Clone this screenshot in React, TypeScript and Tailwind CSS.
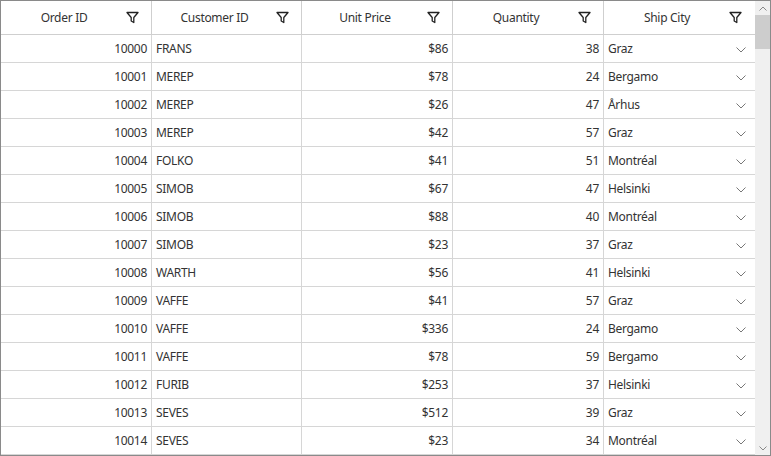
const rows: [number, string, string, number, string][] = [
  [10000, "FRANS", "$86", 38, "Graz"],
  [10001, "MEREP", "$78", 24, "Bergamo"],
  [10002, "MEREP", "$26", 47, "Århus"],
  [10003, "MEREP", "$42", 57, "Graz"],
  [10004, "FOLKO", "$41", 51, "Montréal"],
  [10005, "SIMOB", "$67", 47, "Helsinki"],
  [10006, "SIMOB", "$88", 40, "Montréal"],
  [10007, "SIMOB", "$23", 37, "Graz"],
  [10008, "WARTH", "$56", 41, "Helsinki"],
  [10009, "VAFFE", "$41", 57, "Graz"],
  [10010, "VAFFE", "$336", 24, "Bergamo"],
  [10011, "VAFFE", "$78", 59, "Bergamo"],
  [10012, "FURIB", "$253", 37, "Helsinki"],
  [10013, "SEVES", "$512", 39, "Graz"],
  [10014, "SEVES", "$23", 34, "Montréal"],
];

function Funnel() {
  return (
    <svg width="13" height="13" viewBox="0 0 13 13" fill="none" stroke="#222" strokeWidth="1.3">
      <path d="M1 1.5h11L7.8 6.5v5L5.2 10V6.5z" strokeLinejoin="round" />
    </svg>
  );
}

function Chevron() {
  return (
    <svg width="10" height="6" viewBox="0 0 10 6" fill="none" stroke="#777" strokeWidth="1">
      <path d="M0.5 0.5L5 5l4.5-4.5" />
    </svg>
  );
}

const cols = ["w-[151px]", "w-[150px]", "w-[151px]", "w-[151px]", "w-[150px]"];
const heads = ["Order ID", "Customer ID", "Unit Price", "Quantity", "Ship City"];

export default function App() {
  return (
    <div className="w-[771px] h-[456px] bg-white border border-[#8a8a8a] flex overflow-hidden text-[12px] tracking-[-0.3px] text-[#333]" style={{ fontFamily: '"Noto Sans", "Open Sans", sans-serif' }}>
      <div className="w-[754px] flex flex-col">
        <div className="flex h-[34px] border-b border-[#cfcfcf] shrink-0">
          {heads.map((h, i) => (
            <div key={h} className={`${cols[i]} ${i < 4 ? "border-r border-[#cfcfcf]" : ""} relative flex items-center justify-center pr-[24px]`}>
              <span>{h}</span>
              <span className="absolute right-[12px] top-[10px]"><Funnel /></span>
            </div>
          ))}
        </div>
        {rows.map((r) => (
          <div key={r[0]} className="flex h-[28px] border-b border-[#d6d6d6] shrink-0">
            <div className={`${cols[0]} border-r border-[#d6d6d6] flex items-center justify-end pr-[4px]`}>{r[0]}</div>
            <div className={`${cols[1]} border-r border-[#d6d6d6] flex items-center pl-[4px]`}>{r[1]}</div>
            <div className={`${cols[2]} border-r border-[#d6d6d6] flex items-center justify-end pr-[4px]`}>{r[2]}</div>
            <div className={`${cols[3]} border-r border-[#d6d6d6] flex items-center justify-end pr-[4px]`}>{r[3]}</div>
            <div className={`${cols[4]} flex items-center justify-between pl-[4px] pr-[8px]`}>
              <span>{r[4]}</span>
              <span className="mt-[3px]"><Chevron /></span>
            </div>
          </div>
        ))}
      </div>
      <div className="w-[15px] bg-[#f0f0f0] flex flex-col items-center">
        <div className="h-[14px] flex items-center justify-center">
          <svg width="8" height="5" viewBox="0 0 8 5" fill="none" stroke="#888"><path d="M0.5 4.5L4 1l3.5 3.5" /></svg>
        </div>
        <div className="w-full h-[34px] bg-[#cdcdcd]" />
        <div className="flex-1" />
        <div className="h-[14px] flex items-center justify-center">
          <svg width="8" height="5" viewBox="0 0 8 5" fill="none" stroke="#888"><path d="M0.5 0.5L4 4l3.5-3.5" /></svg>
        </div>
      </div>
    </div>
  );
}
